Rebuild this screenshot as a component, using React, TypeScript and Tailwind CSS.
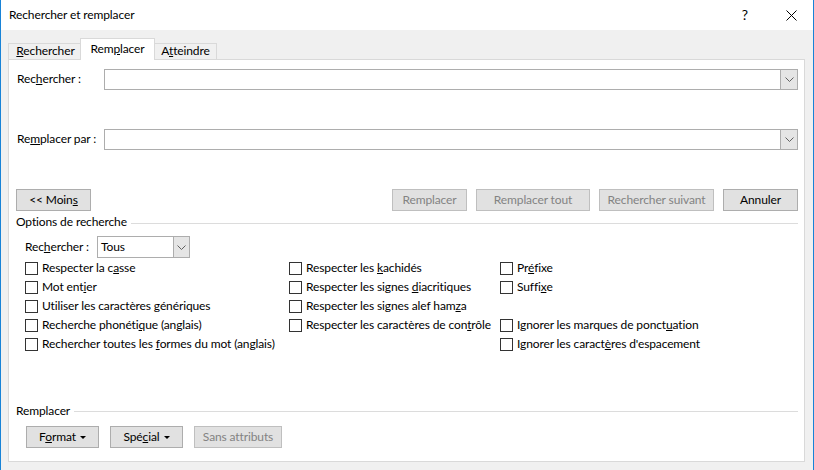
import React from "react";

const F = "font-['Lato','Liberation_Sans',Arial,sans-serif]";
const TX = "relative -top-px";

const Chevron = () => (
  <svg width="9" height="5" viewBox="0 0 9 5">
    <path d="M0.5 0.5 L4.5 4.5 L8.5 0.5" fill="none" stroke="#606060" strokeWidth="1" />
  </svg>
);

const Caret = () => (
  <svg width="6" height="3" viewBox="0 0 6 3" className="ml-[4px]">
    <path d="M0 0 L6 0 L3 3 Z" fill="#000" />
  </svg>
);

function Combo({ className }: { className?: string }) {
  return (
    <div className={`flex h-[21px] border border-[#adadad] bg-white ${className ?? ""}`}>
      <div className="flex-1" />
      <div className="flex w-[17px] items-center justify-center border-l border-[#adadad] bg-[#e5e5e5]">
        <Chevron />
      </div>
    </div>
  );
}

function Btn({
  w,
  disabled,
  children,
}: {
  w: string;
  disabled?: boolean;
  children: React.ReactNode;
}) {
  return (
    <div
      className={`flex h-[22px] items-center justify-center border bg-[#e1e1e1] ${w} ${
        disabled ? "border-[#bfbfbf] text-[#838383]" : "border-[#adadad] text-black"
      }`}
    >
      {children}
    </div>
  );
}

function Check({ children }: { children?: React.ReactNode }) {
  if (!children) return <div className="h-[19px]" />;
  return (
    <div className="flex h-[19px] items-center">
      <div className="h-[13px] w-[13px] border border-[#333333] bg-white" />
      <span className={`ml-[4px] whitespace-nowrap ${TX}`}>{children}</span>
    </div>
  );
}

export default function App() {
  return (
    <div
      className={`${F} flex h-[470px] w-[814px] flex-col overflow-hidden border-x border-[#1883d7] bg-[#f0f0f0] text-[12px] leading-[15px] tracking-[-0.12px] text-black`}
    >
      {/* Title bar */}
      <div className="flex h-[30px] shrink-0 items-center bg-white pl-[8px]">
        <span className={`text-[12px] ${TX}`}>Rechercher et remplacer</span>
        <span className={`ml-auto mr-[38px] text-[14px] ${TX}`}>?</span>
        <svg width="11" height="11" viewBox="0 0 11 11" className="mr-[16px]">
          <path d="M0.5 0.5 L10.5 10.5 M10.5 0.5 L0.5 10.5" stroke="#000" strokeWidth="1" />
        </svg>
      </div>

      <div className="flex flex-col pl-[7px] pr-[8px] pt-[8px]">
        {/* Tabs */}
        <div className="-mb-px flex h-[22px] items-end">
          <div className="mb-px flex h-[16px] w-[72px] items-center justify-center border-l border-t border-[#d9d9d9] bg-[#f0f0f0] pl-[2px]">
            <span className={TX}>
              <u>R</u>echercher
            </span>
          </div>
          <div className="relative z-10 flex h-[22px] w-[75px] items-center justify-center border-x border-t border-[#d9d9d9] bg-white pb-[1px]">
            <span className={TX}>
              Rem<u>p</u>lacer
            </span>
          </div>
          <div className="mb-px flex h-[16px] w-[62px] items-center justify-center border-r border-t border-[#d9d9d9] bg-[#f0f0f0]">
            <span className={TX}>
              A<u>t</u>teindre
            </span>
          </div>
        </div>

        {/* Panel */}
        <div className="flex h-[403px] flex-col border border-[#d9d9d9] bg-white pr-[6px]">
          <div className="mt-[9px] flex items-center pl-[8px]">
            <span className={`w-[87px] ${TX}`}>
              Rec<u>h</u>ercher :
            </span>
            <Combo className="flex-1" />
          </div>
          <div className="mt-[39px] flex items-center pl-[8px]">
            <span className={`w-[87px] ${TX}`}>
              Re<u>m</u>placer par :
            </span>
            <Combo className="flex-1" />
          </div>

          <div className="mt-[39px] flex items-center pl-[7px]">
            <Btn w="w-[75px]">
              <span className={TX}>
                &lt;&lt; Moin<u>s</u>
              </span>
            </Btn>
            <div className="ml-auto flex gap-[9px]">
              <Btn w="w-[75px]" disabled>
                <span className={TX}>Remplacer</span>
              </Btn>
              <Btn w="w-[114px]" disabled>
                <span className={TX}>Remplacer tout</span>
              </Btn>
              <Btn w="w-[115px]" disabled>
                <span className={TX}>Rechercher suivant</span>
              </Btn>
              <Btn w="w-[75px]">
                <span className={TX}>Annuler</span>
              </Btn>
            </div>
          </div>

          <div className="flex h-[22px] items-center pl-[7px]">
            <span className={`whitespace-nowrap ${TX}`}>Options de recherche</span>
            <div className="ml-[4px] mt-[2px] h-px flex-1 bg-[#dcdcdc]" />
          </div>

          <div className="mt-[3px] flex items-center pl-[16px]">
            <span className={`w-[72px] ${TX}`}>
              Rec<u>h</u>ercher :
            </span>
            <div className="flex h-[22px] w-[93px] border border-[#adadad] bg-white">
              <div className="flex flex-1 items-center pl-[3px]">
                <span className={TX}>Tous</span>
              </div>
              <div className="flex w-[16px] items-center justify-center border-l border-[#adadad] bg-[#e5e5e5]">
                <Chevron />
              </div>
            </div>
          </div>

          <div className="mt-[1px] grid grid-cols-[264px_211px_1fr] pl-[16px]">
            <Check>
              Respecter la c<u>a</u>sse
            </Check>
            <Check>
              Respecter les <u>k</u>achidés
            </Check>
            <Check>
              Pr<u>é</u>fixe
            </Check>

            <Check>
              Mot ent<u>i</u>er
            </Check>
            <Check>
              Respecter les signes <u>d</u>iacritiques
            </Check>
            <Check>
              Suffi<u>x</u>e
            </Check>

            <Check>
              Utiliser les caractères <u>g</u>énériques
            </Check>
            <Check>
              Respecter les signes alef ham<u>z</u>a
            </Check>
            <Check />

            <Check>
              Recherche phonéti<u>q</u>ue (anglais)
            </Check>
            <Check>
              Respecter les caractères de con<u>t</u>rôle
            </Check>
            <Check>
              Ignorer les marques de ponct<u>u</u>ation
            </Check>

            <Check>
              Rechercher toutes les <u>f</u>ormes du mot (anglais)
            </Check>
            <Check />
            <Check>
              Ignorer les caract<u>è</u>res d'espacement
            </Check>
          </div>

          <div className="mt-auto flex h-[22px] items-center pl-[7px]">
            <span className={TX}>Remplacer</span>
            <div className="ml-[4px] h-px flex-1 bg-[#dcdcdc]" />
          </div>
          <div className="mb-[13px] mt-[4px] flex gap-[11px] pl-[17px]">
            <Btn w="w-[73px]">
              <span className={TX}>
                F<u>o</u>rmat
              </span>
              <Caret />
            </Btn>
            <Btn w="w-[73px]">
              <span className={TX}>
                Spé<u>c</u>ial
              </span>
              <Caret />
            </Btn>
            <Btn w="w-[88px]" disabled>
              <span className={TX}>Sans attributs</span>
            </Btn>
          </div>
        </div>
      </div>
    </div>
  );
}
